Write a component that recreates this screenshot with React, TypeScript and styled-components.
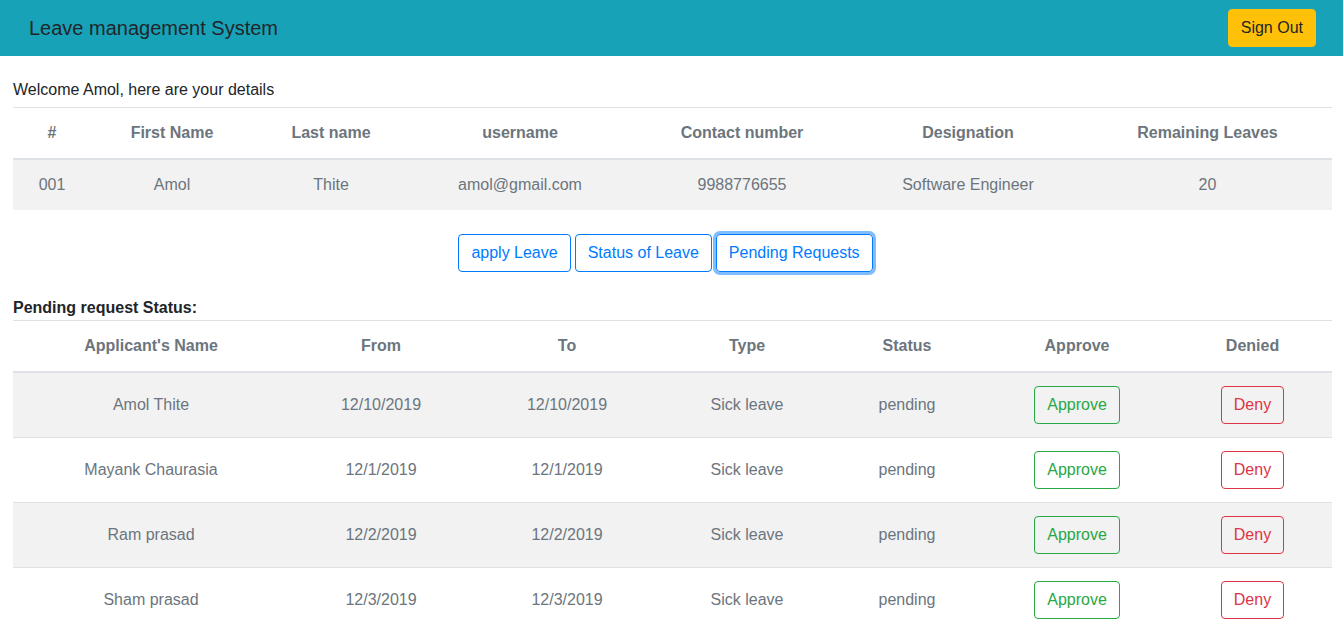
import styled, { createGlobalStyle } from 'styled-components';

const GlobalStyle = createGlobalStyle`
  * { box-sizing: border-box; }
  body {
    margin: 0;
    font-family: "Liberation Sans", Arial, sans-serif;
    font-size: 16px;
    line-height: 1.5;
    color: #212529;
    background: #fff;
  }
`;

const Navbar = styled.nav`
  height: 56px;
  background: #17a2b8;
  display: flex;
  align-items: center;
  justify-content: space-between;
  padding: 0 27px 0 29px;
`;

const Brand = styled.span`
  font-size: 20px;
  color: #212529;
`;

const Button = styled.button<{ $tone: string; $focused?: boolean }>`
  font-family: inherit;
  font-size: 16px;
  line-height: 24px;
  padding: 6px 12px;
  border-radius: 4px;
  background: transparent;
  border: 1px solid ${(p) => p.$tone};
  color: ${(p) => p.$tone};
  cursor: pointer;
  box-shadow: ${(p) => (p.$focused ? '0 0 0 3px rgba(0, 123, 255, 0.5)' : 'none')};
`;

const SignOut = styled(Button)`
  background: #ffc107;
  border-color: #ffc107;
  color: #212529;
`;

const Content = styled.main`
  padding: 22px 11px 0 13px;
`;

const Welcome = styled.p`
  margin: 0 0 5px;
`;

const Table = styled.table`
  width: 100%;
  border-collapse: collapse;
  table-layout: fixed;
  text-align: center;
  color: #6c757d;
`;

const Col = styled.col<{ $w: number }>`
  width: ${(p) => p.$w}px;
`;

const Th = styled.th`
  padding: 13px 12px;
  border-top: 1px solid #dee2e6;
  border-bottom: 2px solid #dee2e6;
  font-weight: bold;
`;

const Row = styled.tr<{ $striped: boolean }>`
  background: ${(p) => (p.$striped ? '#f2f2f2' : '#fff')};
`;

const Td = styled.td`
  padding: 13px 12px;
  border-top: 1px solid #dee2e6;
  vertical-align: middle;
`;

const FirstTd = styled(Td)`
  border-top: none;
`;

const Tabs = styled.div`
  display: flex;
  justify-content: center;
  gap: 4px;
  margin: 24px 0 24px;
  padding-right: 14px;
`;

const SectionTitle = styled.h6`
  margin: 0;
  font-size: 16px;
  font-weight: bold;
  line-height: 24px;
`;

const details = ['001', 'Amol', 'Thite', 'amol@gmail.com', '9988776655', 'Software Engineer', '20'];
const detailHead = ['#', 'First Name', 'Last name', 'username', 'Contact number', 'Designation', 'Remaining Leaves'];
const detailCols = [78, 162, 156, 222, 222, 230, 249];

const requestHead = ["Applicant's Name", 'From', 'To', 'Type', 'Status', 'Approve', 'Denied'];
const requestCols = [276, 184, 188, 172, 148, 192, 159];

const requests = [
  { name: 'Amol Thite', from: '12/10/2019', to: '12/10/2019' },
  { name: 'Mayank Chaurasia', from: '12/1/2019', to: '12/1/2019' },
  { name: 'Ram prasad', from: '12/2/2019', to: '12/2/2019' },
  { name: 'Sham prasad', from: '12/3/2019', to: '12/3/2019' },
];

export default function App() {
  return (
    <>
      <GlobalStyle />
      <Navbar>
        <Brand>Leave management System</Brand>
        <SignOut $tone="#ffc107">Sign Out</SignOut>
      </Navbar>

      <Content>
        <Welcome>Welcome Amol, here are your details</Welcome>
        <Table>
          <colgroup>
            {detailCols.map((w, i) => (
              <Col key={i} $w={w} />
            ))}
          </colgroup>
          <thead>
            <tr>
              {detailHead.map((h) => (
                <Th key={h}>{h}</Th>
              ))}
            </tr>
          </thead>
          <tbody>
            <Row $striped>
              {details.map((d) => (
                <FirstTd key={d}>{d}</FirstTd>
              ))}
            </Row>
          </tbody>
        </Table>

        <Tabs>
          <Button $tone="#007bff">apply Leave</Button>
          <Button $tone="#007bff">Status of Leave</Button>
          <Button $tone="#007bff" $focused>Pending Requests</Button>
        </Tabs>

        <SectionTitle>Pending request Status:</SectionTitle>
        <Table>
          <colgroup>
            {requestCols.map((w, i) => (
              <Col key={i} $w={w} />
            ))}
          </colgroup>
          <thead>
            <tr>
              {requestHead.map((h) => (
                <Th key={h}>{h}</Th>
              ))}
            </tr>
          </thead>
          <tbody>
            {requests.map((r, index) => {
              const Cell = index === 0 ? FirstTd : Td;
              return (
                <Row key={r.name} $striped={index % 2 === 0}>
                  <Cell>{r.name}</Cell>
                  <Cell>{r.from}</Cell>
                  <Cell>{r.to}</Cell>
                  <Cell>Sick leave</Cell>
                  <Cell>pending</Cell>
                  <Cell>
                    <Button $tone="#28a745">Approve</Button>
                  </Cell>
                  <Cell>
                    <Button $tone="#dc3545">Deny</Button>
                  </Cell>
                </Row>
              );
            })}
          </tbody>
        </Table>
      </Content>
    </>
  );
}
